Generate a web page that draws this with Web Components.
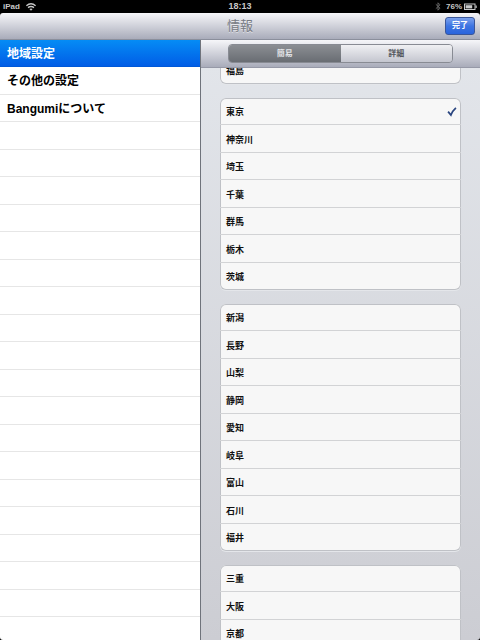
<!DOCTYPE html>
<html lang="ja">
<head>
<meta charset="utf-8">
<meta name="viewport" content="width=device-width, initial-scale=1">
<title>情報</title>
<style>
  html, body {
    height: 100%;
    margin: 0;
    background: #000;
  }
  body {
    font-family: "Liberation Sans", "Noto Sans CJK JP", sans-serif;
  }
</style>
</head>
<body>
<settings-app></settings-app>

<script>
const define = (name, html, setup) => {
  const template = document.createElement('template');
  template.innerHTML = html;
  customElements.define(name, class extends HTMLElement {
    constructor() {
      super();
      this.attachShadow({ mode: 'open' })
        .appendChild(template.content.cloneNode(true));
    }
    connectedCallback() {
      if (setup) setup(this, this.shadowRoot);
    }
  });
};

define('status-bar', `
  <style>
    :host {
      display: grid;
      grid-template-columns: 1fr auto 1fr;
      align-items: center;
      height: 13px;
      padding: 0 3px;
      background: #000;
      color: #c8c8c8;
      font-size: 8px;
      font-weight: bold;
      line-height: 13px;
    }
    div { display: flex; align-items: center; gap: 5px; }
    .time { font-size: 9px; }
    .right { justify-content: flex-end; gap: 2px; }
    svg { display: block; }
    .bt { margin-right: 3px; }
  </style>
  <div>
    <span>iPad</span>
    <svg width="12" height="9" viewBox="0 0 12 9" fill="none" stroke="#c8c8c8" stroke-width="1.4">
      <path d="M1.4 3.7Q6 -.1 10.6 3.7M3 5.6Q6 3.3 9 5.6"/>
      <path d="M4.4 7Q6 5.9 7.6 7L6 8.7z" fill="#c8c8c8" stroke="none"/>
    </svg>
  </div>
  <span class="time">18:13</span>
  <div class="right">
    <svg class="bt" width="6" height="9" viewBox="0 0 6 9" fill="none" stroke="#666" stroke-width="1">
      <path d="M.8 2.3L5 6.2L3 8.2V.8L5 2.8L.8 6.7"/>
    </svg>
    <span>76%</span>
    <svg width="13" height="8" viewBox="0 0 13 8">
      <rect x=".5" y="1" width="10.5" height="5.5" fill="none" stroke="#c8c8c8"/>
      <rect x="1.6" y="2.2" width="6.6" height="3.2" fill="#c8c8c8"/>
      <path d="M11.5 2.6h1.2v2.5h-1.2z" fill="#c8c8c8"/>
    </svg>
  </div>
`);

define('nav-bar', `
  <style>
    :host {
      display: grid;
      grid-template-columns: 1fr auto 1fr;
      align-items: center;
      height: 27px;
      box-sizing: border-box;
      padding: 0 5px;
      border-bottom: 1px solid #8b8f9c;
      border-radius: 3px 3px 0 0;
      background: linear-gradient(#f6f6f9, #a9acba);
    }
    h1 {
      grid-column: 2;
      margin: 0;
      color: #777b83;
      font-size: 13px;
      font-weight: normal;
      line-height: 20px;
      text-shadow: 0 1px 0 rgba(255, 255, 255, .5);
    }
    ::slotted(*) { grid-column: 3; justify-self: end; }
  </style>
  <h1></h1>
  <slot></slot>
`, (el, root) => {
  root.querySelector('h1').textContent = el.getAttribute('heading');
});

define('done-button', `
  <style>
    :host { display: block; }
    button {
      display: block;
      width: 30px;
      height: 18px;
      padding: 0;
      border: 1px solid #3a5699;
      border-radius: 3px;
      background: linear-gradient(#7ba0ec, #3d74e2 50%, #2a64dc);
      color: #fff;
      font: bold 8px/16px "Liberation Sans", "Noto Sans CJK JP", sans-serif;
    }
  </style>
  <button type="button"><slot></slot></button>
`);

define('menu-list', `
  <style>
    :host {
      display: block;
      overflow: hidden;
      background: #fff;
      border-right: 1px solid #6f737b;
    }
    ul { margin: 0; padding: 0; list-style: none; }
    li {
      box-sizing: border-box;
      height: 27px;
      border-bottom: 1px solid #e6e6e6;
    }
    li:nth-child(even) { height: 28px; }
    a {
      display: block;
      padding: 0 7px;
      color: #000;
      font-size: 12px;
      font-weight: bold;
      line-height: 29px;
      text-decoration: none;
    }
    li.selected {
      border-color: #0058d8;
      background: linear-gradient(#058cf5, #015de6);
    }
    .selected a { color: #fff; }
  </style>
  <ul></ul>
`, (el, root) => {
  const items = el.getAttribute('items').split(',');
  const rows = Number(el.getAttribute('rows'));
  const ul = root.querySelector('ul');
  for (let i = 0; i < rows; i++) {
    const li = document.createElement('li');
    if (items[i]) {
      const a = document.createElement('a');
      a.href = '#';
      a.textContent = items[i];
      li.appendChild(a);
    }
    if (i === 0) li.className = 'selected';
    ul.appendChild(li);
  }
});

define('segmented-control', `
  <style>
    :host {
      display: flex;
      box-sizing: border-box;
      height: 19px;
      border: 1px solid #888b93;
      border-radius: 4px;
      overflow: hidden;
    }
    button {
      flex: 1;
      padding: 0;
      border: 0;
      background: linear-gradient(#f0f0f3, #c4c6cf);
      color: #55585e;
      font: bold 8px/17px "Liberation Sans", "Noto Sans CJK JP", sans-serif;
    }
    button[aria-pressed="true"] {
      background: linear-gradient(#8b8e93, #696d73);
      color: #e4e5e8;
    }
  </style>
`, (el, root) => {
  el.getAttribute('items').split(',').forEach((text, i) => {
    const button = document.createElement('button');
    button.type = 'button';
    button.textContent = text;
    button.setAttribute('aria-pressed', i === 0);
    root.appendChild(button);
  });
});

define('table-group', `
  <style>
    :host {
      display: block;
      box-sizing: border-box;
      border-radius: 6px;
      background: #f7f7f7;
      box-shadow: inset 0 0 0 1px #bfc1c6, 0 1px 0 #e4e6ea;
    }
    ul { margin: 0; padding: 0; list-style: none; }
    li {
      display: flex;
      align-items: center;
      justify-content: space-between;
      box-sizing: border-box;
      height: 27px;
      padding: 1px 4px 0 6px;
      border-bottom: 1px solid #d2d3d5;
      color: #111;
      font-size: 9px;
      font-weight: bold;
    }
    li:nth-child(even) { height: 28px; }
    li:last-child { border-bottom-color: transparent; }
  </style>
  <ul></ul>
`, (el, root) => {
  const ul = root.querySelector('ul');
  for (const name of el.getAttribute('items').split(',')) {
    const li = document.createElement('li');
    li.textContent = name;
    if (name === el.getAttribute('checked')) {
      li.insertAdjacentHTML('beforeend', `
        <svg width="10" height="10" viewBox="0 0 10 10" fill="none" stroke="#2b4680" stroke-width="1.8">
          <path d="M1.1 4.6L3.9 8Q5.5 3.8 8.9 .8"/>
        </svg>`);
    }
    ul.appendChild(li);
  }
});

define('region-pane', `
  <style>
    :host {
      display: flex;
      flex-direction: column;
      min-height: 0;
      background: linear-gradient(#e3e6eb, #cccdd3);
    }
    header {
      padding: 4px 27px;
      border-bottom: 1px solid #9699a7;
      background: linear-gradient(#f6f6f9, #a9acba);
    }
    .scroll {
      flex: 1;
      display: flex;
      flex-direction: column;
      gap: 14px;
      min-height: 0;
      padding: 0 19px 14px;
      overflow-y: auto;
      scrollbar-width: none;
    }
    .scroll > * { flex: none; }
  </style>
  <header><segmented-control items="簡易,詳細"></segmented-control></header>
  <div class="scroll">
    <table-group items="福島"></table-group>
    <table-group items="東京,神奈川,埼玉,千葉,群馬,栃木,茨城" checked="東京"></table-group>
    <table-group items="新潟,長野,山梨,静岡,愛知,岐阜,富山,石川,福井"></table-group>
    <table-group items="三重,大阪,京都"></table-group>
  </div>
`, (el, root) => {
  root.querySelector('.scroll').scrollTop = 11;
});

define('settings-app', `
  <style>
    :host {
      display: flex;
      flex-direction: column;
      height: 100vh;
    }
    main {
      flex: 1;
      display: grid;
      grid-template-columns: 201px 1fr;
      grid-template-rows: minmax(0, 1fr);
      min-height: 0;
      overflow: hidden;
      border-radius: 0 0 3px 3px;
    }
  </style>
  <status-bar></status-bar>
  <nav-bar heading="情報"><done-button>完了</done-button></nav-bar>
  <main>
    <menu-list items="地域設定,その他の設定,Bangumiについて" rows="22"></menu-list>
    <region-pane></region-pane>
  </main>
`);
</script>
</body>
</html>
